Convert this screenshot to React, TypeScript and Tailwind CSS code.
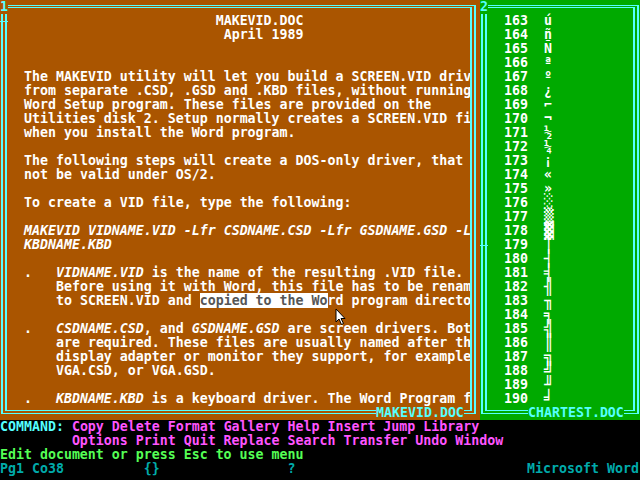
type Seg = [string, "n" | "i" | "h"]

// window 1 document rows (rows 1..28), text starts at column 3
const docRows: Seg[][] = [
  [["                        MAKEVID.DOC", "n"]],
  [["                         April 1989", "n"]],
  [],
  [],
  [["The MAKEVID utility will let you build a SCREEN.VID driv", "n"]],
  [["from separate .CSD, .GSD and .KBD files, without running", "n"]],
  [["Word Setup program. These files are provided on the", "n"]],
  [["Utilities disk 2. Setup normally creates a SCREEN.VID fi", "n"]],
  [["when you install the Word program.", "n"]],
  [],
  [["The following steps will create a DOS-only driver, that", "n"]],
  [["not be valid under OS/2.", "n"]],
  [],
  [["To create a VID file, type the following:", "n"]],
  [],
  [["MAKEVID VIDNAME.VID -Lfr CSDNAME.CSD -Lfr GSDNAME.GSD -L", "i"]],
  [["KBDNAME.KBD", "i"]],
  [],
  [
    [".   ", "n"],
    ["VIDNAME.VID", "i"],
    [" is the name of the resulting .VID file.", "n"],
  ],
  [["    Before using it with Word, this file has to be renam", "n"]],
  [
    ["    to SCREEN.VID and ", "n"],
    ["copied to the Wo", "h"],
    ["rd program directo", "n"],
  ],
  [],
  [
    [".   ", "n"],
    ["CSDNAME.CSD", "i"],
    [", and ", "n"],
    ["GSDNAME.GSD", "i"],
    [" are screen drivers. Bot", "n"],
  ],
  [["    are required. These files are usually named after th", "n"]],
  [["    display adapter or monitor they support, for example", "n"]],
  [["    VGA.CSD, or VGA.GSD.", "n"]],
  [],
  [
    [".   ", "n"],
    ["KBDNAME.KBD", "i"],
    [" is a keyboard driver. The Word Program f", "n"],
  ],
]

const chars = "úñÑªº¿⌐¬½¼¡«»░▒▓│┤╡╢╖╕╣║╗╝╜╛"

function Frame({ children }: { children: React.ReactNode }) {
  return (
    <div className="h-full border-x-2 border-y border-[#55ffff] px-[2px] pt-px pb-[2px]">
      <div className="h-full overflow-hidden border-x-2 border-y border-[#55ffff] pt-[6px]">{children}</div>
    </div>
  )
}

export default function App() {
  return (
    <div
      className="relative h-[480px] w-[640px] overflow-hidden bg-black text-[13.28px] font-bold leading-[14px] text-white"
      style={{ fontFamily: '"DejaVu Sans Mono", "Liberation Mono", monospace' }}
    >
      <div className="flex h-[420px]">
        {/* window 1 */}
        <div className="relative h-full w-[480px] bg-[#aa5500] pb-[6px] pl-px pr-[4px] pt-[5px]">
          <Frame>
            <div className="pl-[17px]">
              {docRows.map((row, i) => (
                <div key={i} className="h-[14px] whitespace-pre">
                  {row.map(([t, s], j) =>
                    s === "i" ? (
                      <span key={j} className="italic">
                        {t}
                      </span>
                    ) : s === "h" ? (
                      <span key={j} className="bg-white text-[#555555]">
                        {t}
                      </span>
                    ) : (
                      <span key={j}>{t}</span>
                    )
                  )}
                </div>
              ))}
            </div>
          </Frame>
          <div className="absolute left-0 top-0 h-[14px] w-[8px] bg-[#aa5500] text-[#55ffff]">1</div>
          <div className="absolute left-0 top-[21px] h-px w-[8px] bg-[#55ffff]" />
          <div className="absolute left-[376px] top-[406px] h-[14px] whitespace-pre bg-[#aa5500] text-[#55ffff]">
            MAKEVID.DOC
          </div>
        </div>

        {/* window 2 */}
        <div className="relative h-full w-[160px] bg-[#00aa00] pb-[6px] pl-px pr-px pt-[5px]">
          <Frame>
            <div className="pl-[17px]">
              {Array.from(chars).map((c, i) => (
                <div key={i} className="flex h-[14px] whitespace-pre">
                  <span>{`${163 + i}  `}</span>
                  {i >= 13 ? (
                    <span className="block h-[14px] w-[8px] text-[16px] leading-[14px]">{c}</span>
                  ) : (
                    <span>{c}</span>
                  )}
                </div>
              ))}
            </div>
          </Frame>
          <div className="absolute left-0 top-0 h-[14px] w-[8px] bg-[#00aa00] text-[#55ffff]">2</div>
          <div className="absolute left-0 top-[245px] h-px w-[8px] bg-[#55ffff]" />
          <div className="absolute left-[48px] top-[406px] h-[14px] whitespace-pre bg-[#00aa00] text-[#55ffff]">
            CHARTEST.DOC
          </div>
        </div>
      </div>

      {/* command area */}
      <div className="whitespace-pre">
        <div className="h-[14px]">
          <span className="text-[#55ffff]">COMMAND: </span>
          <span className="text-[#ff55ff]">Copy Delete Format Gallery Help Insert Jump Library</span>
        </div>
        <div className="h-[14px] text-[#ff55ff]">{"         Options Print Quit Replace Search Transfer Undo Window"}</div>
        <div className="h-[14px] text-[#55ff55]">Edit document or press Esc to use menu</div>
        <div className="h-[14px] text-[#00aaaa]">
          {"Pg1 Co38          {}                ?                             Microsoft Word"}
        </div>
      </div>

      {/* mouse pointer */}
      <svg className="absolute left-[335px] top-[308px]" width="12" height="18" viewBox="0 0 12 18">
        <path d="M1 1 L1 14 L4 11 L6.5 16.5 L8.5 15.5 L6 10.5 L10 10.5 Z" fill="white" stroke="black" strokeWidth="1" />
      </svg>
    </div>
  )
}
